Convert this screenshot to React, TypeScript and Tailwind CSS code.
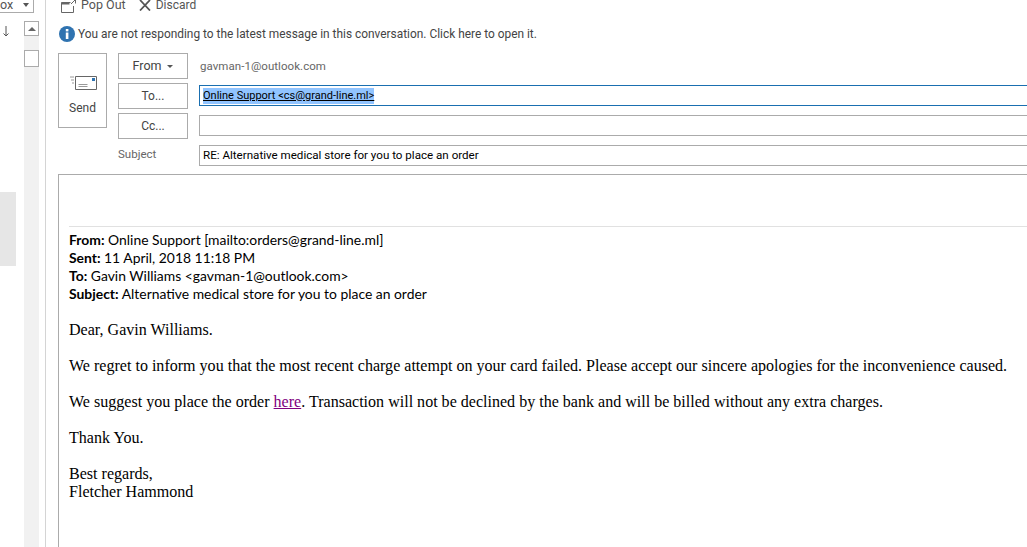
const seg = "font-['Roboto',sans-serif]";

function Btn({ children, cls }: { children: React.ReactNode; cls?: string }) {
  return (
    <div className={"w-[70px] h-[26px] border border-[#ababab] flex items-center justify-center text-[12px] text-[#444] " + (cls || "")}>
      {children}
    </div>
  );
}

export default function App() {
  return (
    <div className={"w-[1027px] h-[547px] overflow-hidden bg-white flex " + seg}>
      <div className="relative w-[24px] shrink-0">
        <div className="relative z-10 w-[34px] h-[13px] border-r border-b border-[#ababab] bg-white flex justify-between pr-[4px] text-[12.500px] text-[#555] leading-[10px]">
          <span>ox</span>
          <span className="mt-[3px] w-0 h-0 border-x-[3px] border-x-transparent border-t-[4px] border-t-[#555]" />
        </div>
        <svg className="mt-[12px] ml-[2px]" width="8" height="13" viewBox="0 0 8 13">
          <path d="M4 1v10M1.500 8.500 4 11l2.500-2.500" fill="none" stroke="#555" strokeWidth="1" />
        </svg>
        <div className="mt-[154px] w-[16px] h-[74px] bg-[#e6e6e6]" />
      </div>
      <div className="w-[15px] shrink-0 bg-[#f1f1f1]">
        <div className="h-[21px] bg-white" />
        <div className="h-[15px] border border-[#ababab] bg-white flex items-center justify-center">
          <span className="w-0 h-0 border-x-[4px] border-x-transparent border-b-[4px] border-b-[#666]" />
        </div>
        <div className="mt-[14px] h-[17px] border border-[#ababab] bg-white" />
      </div>
      <div className="w-[6px] shrink-0" />
      <div className="w-px shrink-0 bg-[#d4d4d4]" />
      <div className="flex-1 min-w-0 flex flex-col">
        <div className="h-[12px] pl-[15px] flex items-end text-[12.500px] text-[#555] leading-[15px]">
          <svg width="15" height="14" viewBox="0 0 15 14" className="mb-[-1px]">
            <path d="M.5 13.500V3.500h9M.5 13.500h12V7" fill="none" stroke="#666" />
            <path d="M.5 4.500h8" stroke="#666" strokeWidth="2" />
            <path d="M10.500.5h4v4M14.500.5 10 5" fill="none" stroke="#666" />
          </svg>
          <span className="ml-[5px]">Pop Out</span>
          <svg width="12" height="11" viewBox="0 0 12 11" className="ml-[13px] mb-[1px]">
            <path d="M1 0l10 10.500M11 0 1 10.500" stroke="#555" strokeWidth="1.800" />
          </svg>
          <span className="ml-[5px] mb-[-1px] text-[12px]">Discard</span>
        </div>
        <div className="h-[43px] pl-[13px] flex items-center gap-[3px] text-[11.900px] text-[#444]">
          <svg width="16" height="16" viewBox="0 0 16 16">
            <circle cx="8" cy="8" r="8" fill="#2f73b0" />
            <rect x="6.800" y="6.500" width="2.600" height="6.500" fill="#fff" />
            <rect x="6.800" y="3" width="2.600" height="2.400" fill="#fff" />
          </svg>
          <span className="mt-[2px]">You are not responding to the latest message in this conversation. Click here to open it.</span>
        </div>
        <div className="flex pl-[12px] -mt-[2px]">
          <div className="w-[49px] h-[75px] border border-[#ababab] flex flex-col items-center text-[12px] text-[#444] pt-[21px]">
            <svg width="28" height="15" viewBox="0 0 28 15">
              <path d="M6.500 1.500h21v13h-21z" fill="#fff" stroke="#666" />
              <rect x="23" y="3" width="3" height="3" fill="#2f73b0" />
              <path d="M1 2h4M2 5h3M3 8h2M9.500 9.500h9M9.500 11.500h9" stroke="#999" />
            </svg>
            <span className="mt-[9px] leading-[18px]">Send</span>
          </div>
          <div className="w-[11px] shrink-0" />
          <div className="flex flex-col gap-[4px] shrink-0">
            <Btn>
              <span className="text-[12.500px]">From</span>
              <span className="ml-[6px] w-0 h-0 border-x-[3px] border-x-transparent border-t-[3px] border-t-[#555]" />
            </Btn>
            <Btn>To...</Btn>
            <Btn>Cc...</Btn>
            <div className="h-[22px] pt-[1px] flex items-center text-[11.500px] text-[#666]">Subject</div>
          </div>
          <div className="w-[11px] shrink-0" />
          <div className="flex-1 min-w-0 flex flex-col">
            <div className="h-[32px] pl-px pt-[5px] text-[11.500px] text-[#666] tracking-[0.05px]">gavman-1@outlook.com</div>
            <div className="h-[21px] pt-[1px] border-y border-l border-[#1a6fb0] pl-[3px] flex items-center text-[11px] text-black">
              <span className="bg-[#91c4ff] underline">Online Support &lt;cs@grand-line.ml&gt;</span>
            </div>
            <div className="mt-[9px] h-[21px] border-y border-l border-[#ababab]" />
            <div className="mt-[9px] h-[21px] border-y border-l border-[#ababab] pl-[3px] flex items-center text-[11.600px] text-black">
              RE: Alternative medical store for you to place an order
            </div>
          </div>
        </div>
        <div className="mt-[8px] ml-[12px] flex-1 border-t border-l border-[#ababab] pl-[10px] pt-[51px]">
          <div className="border-t border-[#e1e1e1] pt-[4px] font-['Lato',sans-serif] text-[13.900px] leading-[18px] text-black">
            <p><b>From:</b> Online Support [mailto:orders@grand-line.ml]</p>
            <p><b>Sent:</b> 11 April, 2018 11:18 PM</p>
            <p><b>To:</b> Gavin Williams &lt;gavman-1@outlook.com&gt;</p>
            <p><b>Subject:</b> Alternative medical store for you to place an order</p>
          </div>
          <div className="mt-[18px] font-['Liberation_Serif',serif] text-[16.060px] leading-[18px] text-black whitespace-nowrap">
            <p>Dear, Gavin Williams.</p>
            <p className="mt-[18px]">We regret to inform you that the most recent charge attempt on your card failed. Please accept our sincere apologies for the inconvenience caused.</p>
            <p className="mt-[18px]">We suggest you place the order <a className="text-[#800080] underline">here</a>. Transaction will not be declined by the bank and will be billed without any extra charges.</p>
            <p className="mt-[18px]">Thank You.</p>
            <p className="mt-[18px]">Best regards,</p>
            <p>Fletcher Hammond</p>
          </div>
        </div>
      </div>
    </div>
  );
}
